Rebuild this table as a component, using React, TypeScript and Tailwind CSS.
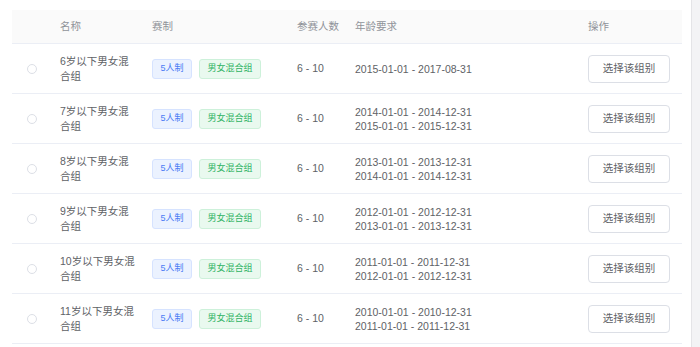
const groups = [
  { name: "6岁以下男女混合组", ages: ["2015-01-01 - 2017-08-31"] },
  { name: "7岁以下男女混合组", ages: ["2014-01-01 - 2014-12-31", "2015-01-01 - 2015-12-31"] },
  { name: "8岁以下男女混合组", ages: ["2013-01-01 - 2013-12-31", "2014-01-01 - 2014-12-31"] },
  { name: "9岁以下男女混合组", ages: ["2012-01-01 - 2012-12-31", "2013-01-01 - 2013-12-31"] },
  { name: "10岁以下男女混合组", ages: ["2011-01-01 - 2011-12-31", "2012-01-01 - 2012-12-31"] },
  { name: "11岁以下男女混合组", ages: ["2010-01-01 - 2010-12-31", "2011-01-01 - 2011-12-31"] },
];

const cols = "grid grid-cols-[48px_92px_145px_58px_233px_94px] items-center";

export default function App() {
  return (
    <div
      className="flex w-full h-[347px] bg-white overflow-hidden"
      style={{ fontFamily: '"Liberation Sans", "Noto Sans CJK SC", sans-serif' }}
    >
      <div className="flex-1 pl-[12px] pt-[10px]">
        <div className="w-[670px]">
          <div className={`${cols} h-[34px] bg-[#fafafa] border-b border-[#ebeef5] text-[10.5px] text-[#909399]`}>
            <div />
            <div>名称</div>
            <div>赛制</div>
            <div>参赛人数</div>
            <div>年龄要求</div>
            <div>操作</div>
          </div>
          {groups.map((g) => (
            <div key={g.name} className={`${cols} h-[50px] border-b border-[#ebeef5] text-[10.5px] text-[#606266]`}>
              <div className="pl-[15px]">
                <div className="w-[10px] h-[10px] rounded-full border border-[#dcdfe6] bg-white" />
              </div>
              <div className="w-[77px] leading-[15px]">{g.name}</div>
              <div className="flex gap-[7px]">
                <span className="h-[20px] px-[7.5px] flex items-center rounded-[3px] border border-[#d6e3ff] bg-[#ebf2ff] text-[9px] text-[#4a7cf5]">
                  5人制
                </span>
                <span className="h-[20px] px-[7.5px] flex items-center rounded-[3px] border border-[#cdf1da] bg-[#e9f9ef] text-[9px] text-[#2fb364]">
                  男女混合组
                </span>
              </div>
              <div>6 - 10</div>
              <div className="leading-[14px]">
                {g.ages.map((a) => (
                  <div key={a}>{a}</div>
                ))}
              </div>
              <div>
                <button className="w-[82px] h-[28px] rounded-[4px] border border-[#dcdfe6] bg-white text-[10.5px] text-[#606266]">
                  选择该组别
                </button>
              </div>
            </div>
          ))}
        </div>
      </div>
      <div className="w-[9px] h-full bg-[#f3f3f5] border-l border-[#e4e4e7]" />
    </div>
  );
}
